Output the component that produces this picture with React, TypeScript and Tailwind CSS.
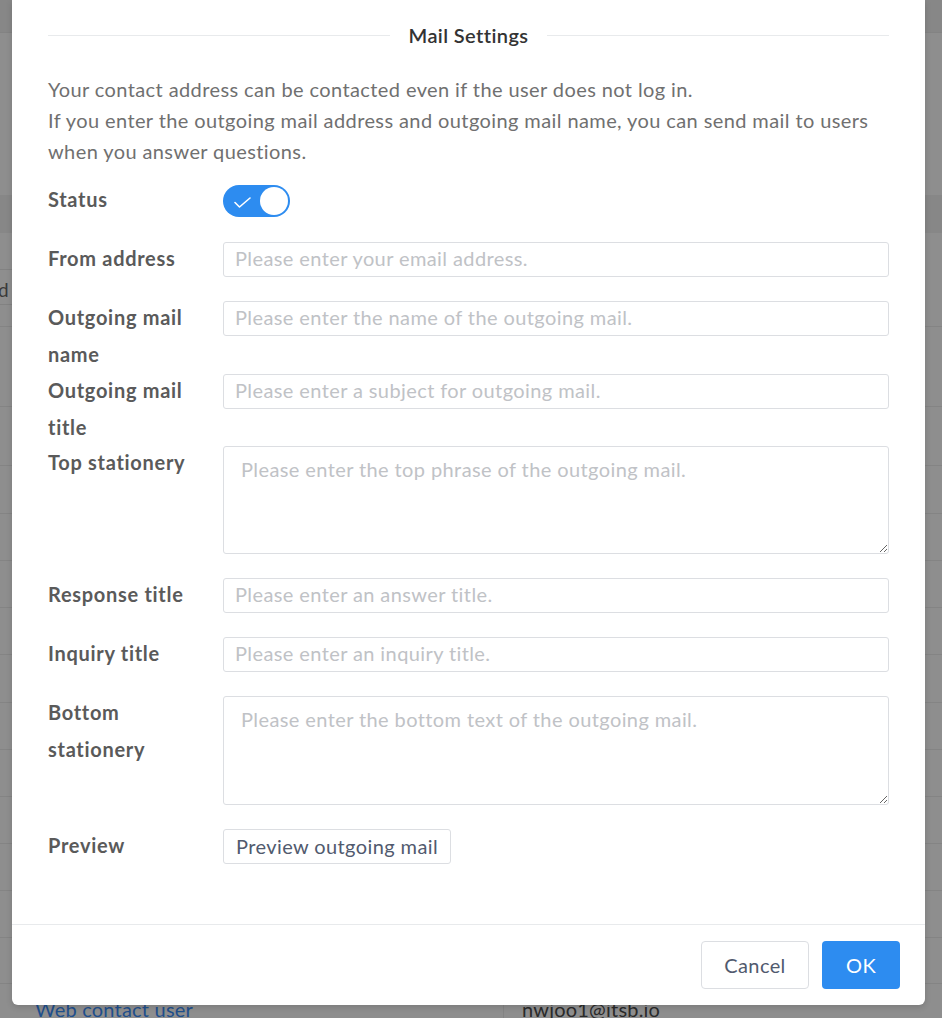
import React from "react";

const FONT = "font-['Source_Sans_Pro','Lato',sans-serif]";

function Label({ lines }: { lines: string[] }) {
  return (
    <div className="w-[175px] shrink-0 -mt-[2px] text-[20px] tracking-[0.7px] leading-[37px] font-bold text-[#5a5a5a]">
      {lines.map((l, i) => (
        <div key={i}>{l}</div>
      ))}
    </div>
  );
}

function InputRow({ lines, placeholder, h = "h-[35px]" }: { lines: string[]; placeholder: string; h?: string }) {
  return (
    <div className={`flex items-start mb-[24px] ${h}`}>
      <Label lines={lines} />
      <input
        className="flex-1 h-[35px] border border-[#dcdee2] rounded-[3px] px-[11px] pb-[4px] text-[20px] tracking-[0.4px] text-[#515a6e] placeholder:text-[#c0c2c6] outline-none bg-white"
        placeholder={placeholder}
      />
    </div>
  );
}

function AreaRow({ lines, placeholder, h }: { lines: string[]; placeholder: string; h: string }) {
  return (
    <div className={`flex items-start mb-[24px] ${h}`}>
      <Label lines={lines} />
      <textarea
        className={`flex-1 ${h} border border-[#dcdee2] rounded-[3px] pl-[17px] pr-[11px] pt-[7px] text-[20px] tracking-[0.4px] leading-[31px] text-[#515a6e] placeholder:text-[#c0c2c6] outline-none bg-white resize-y`}
        placeholder={placeholder}
      />
    </div>
  );
}

export default function App() {
  const tableLines = [326, 406, 465, 513, 560, 607, 654, 702, 749, 796, 843, 890, 937, 983];
  return (
    <div className={`relative w-[942px] h-[1018px] overflow-hidden bg-[#8e8e8e] ${FONT}`}>
      {/* background page (dimmed) */}
      <div className="absolute inset-0">
        <div className="h-[33px] bg-[#878787] border-b border-[#838383]" />
        <div className="h-[162px]" />
        <div className="h-[38px] bg-[#878787]" />
        <div className="relative h-[93px]">
          <div className="absolute left-0 top-[36px] w-[12px] h-[36px] border-t border-b border-[#828282]" />
          <div className="absolute left-[-2px] top-[47px] text-[19px] leading-[20px] text-[#3a3a3a]">d</div>
        </div>
        {tableLines.map((y, i) => (
          <div
            key={y}
            className="border-t border-[#848484]"
            style={{ height: i < tableLines.length - 1 ? tableLines[i + 1] - y : 40 }}
          />
        ))}
      </div>
      <div className="absolute left-[35px] top-[997px] text-[20px] tracking-[0.2px] leading-[24px] text-[#1f4f8c]">Web contact user</div>
      <div className="absolute left-[503px] top-[983px] w-px h-[40px] bg-[#848484]" />
      <div className="absolute left-[522px] top-[997px] text-[20px] tracking-[0.2px] leading-[24px] text-[#2a2a2a]">nwjoo1@itsb.io</div>

      {/* modal */}
      <div className="absolute left-[12px] top-0 w-[913px] h-[1005px] bg-white rounded-b-[6px] shadow-[0_2px_6px_rgba(0,0,0,0.15)] flex flex-col">
        <div className="flex-1 px-[36px]">
          <div className="mt-[24px] h-[22px] flex items-center">
            <div className="flex-1 h-px bg-[#e8eaec]" />
            <div className="px-[19px] text-[20px] tracking-[0.4px] font-semibold text-[#333] leading-[22px]">Mail Settings</div>
            <div className="flex-1 h-px bg-[#e8eaec]" />
          </div>
          <div className="mt-[28px] text-[20px] tracking-[0.4px] leading-[31px] text-[#707070] whitespace-nowrap">
            <div>Your contact address can be contacted even if the user does not log in.</div>
            <div>If you enter the outgoing mail address and outgoing mail name, you can send mail to users</div>
            <div>when you answer questions.</div>
          </div>

          <div className="mt-[16px] flex items-start mb-[24px] h-[35px]">
            <Label lines={["Status"]} />
            <div className="relative w-[67px] h-[32px] rounded-full bg-[#2d8cf0] mt-[2px]">
              <svg className="absolute left-[11px] top-[12px]" width="17" height="11" viewBox="0 0 17 11" fill="none">
                <path d="M1 5.5 L5.5 10 L16 1" stroke="white" strokeWidth="1.6" strokeLinecap="round" strokeLinejoin="round" />
              </svg>
              <div className="absolute right-[2px] top-[2px] w-[28px] h-[28px] rounded-full bg-white" />
            </div>
          </div>

          <InputRow lines={["From address"]} placeholder="Please enter your email address." />
          <InputRow lines={["Outgoing mail", "name"]} placeholder="Please enter the name of the outgoing mail." h="h-[49px]" />
          <InputRow lines={["Outgoing mail", "title"]} placeholder="Please enter a subject for outgoing mail." h="h-[48px]" />
          <AreaRow lines={["Top stationery"]} placeholder="Please enter the top phrase of the outgoing mail." h="h-[108px]" />
          <InputRow lines={["Response title"]} placeholder="Please enter an answer title." />
          <InputRow lines={["Inquiry title"]} placeholder="Please enter an inquiry title." />
          <AreaRow lines={["Bottom", "stationery"]} placeholder="Please enter the bottom text of the outgoing mail." h="h-[109px]" />

          <div className="flex items-start h-[35px]">
            <Label lines={["Preview"]} />
            <button className="h-[35px] px-[12px] pb-[2px] border border-[#dcdee2] rounded-[3px] text-[20px] tracking-[0.4px] text-[#515a6e] bg-white">
              Preview outgoing mail
            </button>
          </div>
        </div>
        <div className="border-t border-[#e8eaec] pt-[16px] pb-[16px] pr-[25px] flex justify-end gap-[13px]">
          <button className="w-[108px] h-[48px] border border-[#dcdee2] rounded-[4px] bg-white text-[20px] tracking-[0.4px] text-[#515a6e]">Cancel</button>
          <button className="w-[78px] h-[48px] rounded-[4px] bg-[#2d8cf0] text-[20px] tracking-[0.4px] text-white">OK</button>
        </div>
      </div>
    </div>
  );
}
